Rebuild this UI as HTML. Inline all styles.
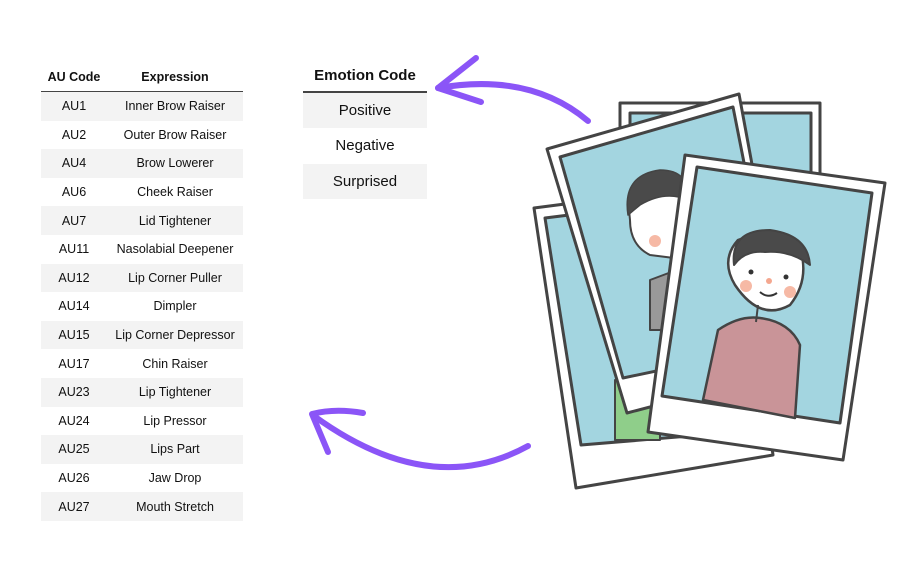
<!DOCTYPE html>
<html><head><style>
body{margin:0;width:905px;height:566px;background:#fff;position:relative;overflow:hidden;font-family:"Liberation Sans",Arial,sans-serif;color:#111}
.t{position:absolute;border-collapse:collapse}
.t td,.t th{text-align:center;padding:0}
.au{left:41px;top:63px;width:202px;font-size:12.5px}
.au th{height:28px;font-size:12.5px;font-weight:bold;border-bottom:1.5px solid #444}
.au td{height:28.6px}
.g td{background:#f3f3f3}
.em{left:303px;top:60px;width:124px;font-size:15px}
.em th{height:31px;font-size:15px;border-bottom:2px solid #444}
.em td{height:35.3px}
svg{position:absolute;left:0;top:0}
</style></head><body>
<table class="t au">
<tr><th style="width:66px">AU Code</th><th>Expression</th></tr>
<tr class="g"><td>AU1</td><td>Inner Brow Raiser</td></tr>
<tr><td>AU2</td><td>Outer Brow Raiser</td></tr>
<tr class="g"><td>AU4</td><td>Brow Lowerer</td></tr>
<tr><td>AU6</td><td>Cheek Raiser</td></tr>
<tr class="g"><td>AU7</td><td>Lid Tightener</td></tr>
<tr><td>AU11</td><td>Nasolabial Deepener</td></tr>
<tr class="g"><td>AU12</td><td>Lip Corner Puller</td></tr>
<tr><td>AU14</td><td>Dimpler</td></tr>
<tr class="g"><td>AU15</td><td>Lip Corner Depressor</td></tr>
<tr><td>AU17</td><td>Chin Raiser</td></tr>
<tr class="g"><td>AU23</td><td>Lip Tightener</td></tr>
<tr><td>AU24</td><td>Lip Pressor</td></tr>
<tr class="g"><td>AU25</td><td>Lips Part</td></tr>
<tr><td>AU26</td><td>Jaw Drop</td></tr>
<tr class="g"><td>AU27</td><td>Mouth Stretch</td></tr>
</table>
<table class="t em">
<tr><th>Emotion Code</th></tr>
<tr class="g"><td>Positive</td></tr>
<tr><td>Negative</td></tr>
<tr class="g"><td>Surprised</td></tr>
</table>
<svg width="905" height="566" viewBox="0 0 905 566">
<g fill="none" stroke="#8b55f7" stroke-width="6" stroke-linecap="round" stroke-linejoin="round">
<path d="M588 121 Q530 72 438 88"/>
<path d="M476 58 L438 88 L481 102"/>
<path d="M528 446 Q430 500 314 416"/>
<path d="M363 413 Q335 408 312 414 L328 452"/>
</g>
<g stroke="#444" stroke-width="3" stroke-linejoin="round">
<!-- back straight -->
<rect x="620" y="103" width="200" height="300" fill="#fff"/>
<rect x="630" y="113" width="181" height="260" fill="#a3d5e0"/>
<!-- left back -->
<polygon points="534,208 735,182 773,455 576,488" fill="#fff"/>
<polygon points="545,218 730,195 762,430 581,445" fill="#a3d5e0"/>
<path d="M615 380 L615 440 L660 440 L660 380Z" fill="#8fce8a" stroke-width="2"/>
<!-- middle tilted -->
<polygon points="547,149 739,94 790,370 627,413" fill="#fff"/>
<polygon points="560,157 733,107 780,345 623,378" fill="#a3d5e0"/>
<path d="M630 220 Q625 180 655 172 Q685 170 690 200 L690 260 L650 255 Q630 245 630 220Z" fill="#fff" stroke-width="2"/>
<path d="M628 215 Q622 175 660 170 Q690 170 688 200 Q665 190 640 205Z" fill="#4a4a4a" stroke-width="1.5"/>
<circle cx="655" cy="241" r="6" fill="#f6b9a5" stroke="none"/>
<path d="M650 280 L690 265 L690 330 L650 330Z" fill="#999" stroke-width="2"/>
<!-- front -->
<polygon points="685,155 885,183 843,460 648,432" fill="#fff"/>
<polygon points="697,167 872,193 840,423 662,396" fill="#a3d5e0"/>
<path d="M703 400 L718 330 Q740 315 760 318 Q790 322 800 345 L795 418Z" fill="#c99498" stroke-width="2.5"/>
<path d="M735 285 Q720 260 738 240 Q770 228 800 248 Q810 280 790 305 Q760 322 735 285Z" fill="#fff" stroke-width="2.5"/>
<path d="M734 265 Q730 230 770 230 Q808 235 810 265 Q790 250 765 252 Q745 250 734 265Z" fill="#4a4a4a" stroke-width="2"/>
<line x1="758" y1="305" x2="756" y2="322" stroke-width="2"/>
</g>
<g stroke="none">
<circle cx="746" cy="286" r="6" fill="#f6b9a5"/>
<circle cx="790" cy="292" r="6" fill="#f6b9a5"/>
<circle cx="751" cy="272" r="2.5" fill="#333"/>
<circle cx="786" cy="277" r="2.5" fill="#333"/>
<circle cx="769" cy="281" r="3" fill="#f4a78f"/>
</g>
<path d="M760 292 Q768 299 777 293" fill="none" stroke="#333" stroke-width="2"/>
</svg>
</body></html>
